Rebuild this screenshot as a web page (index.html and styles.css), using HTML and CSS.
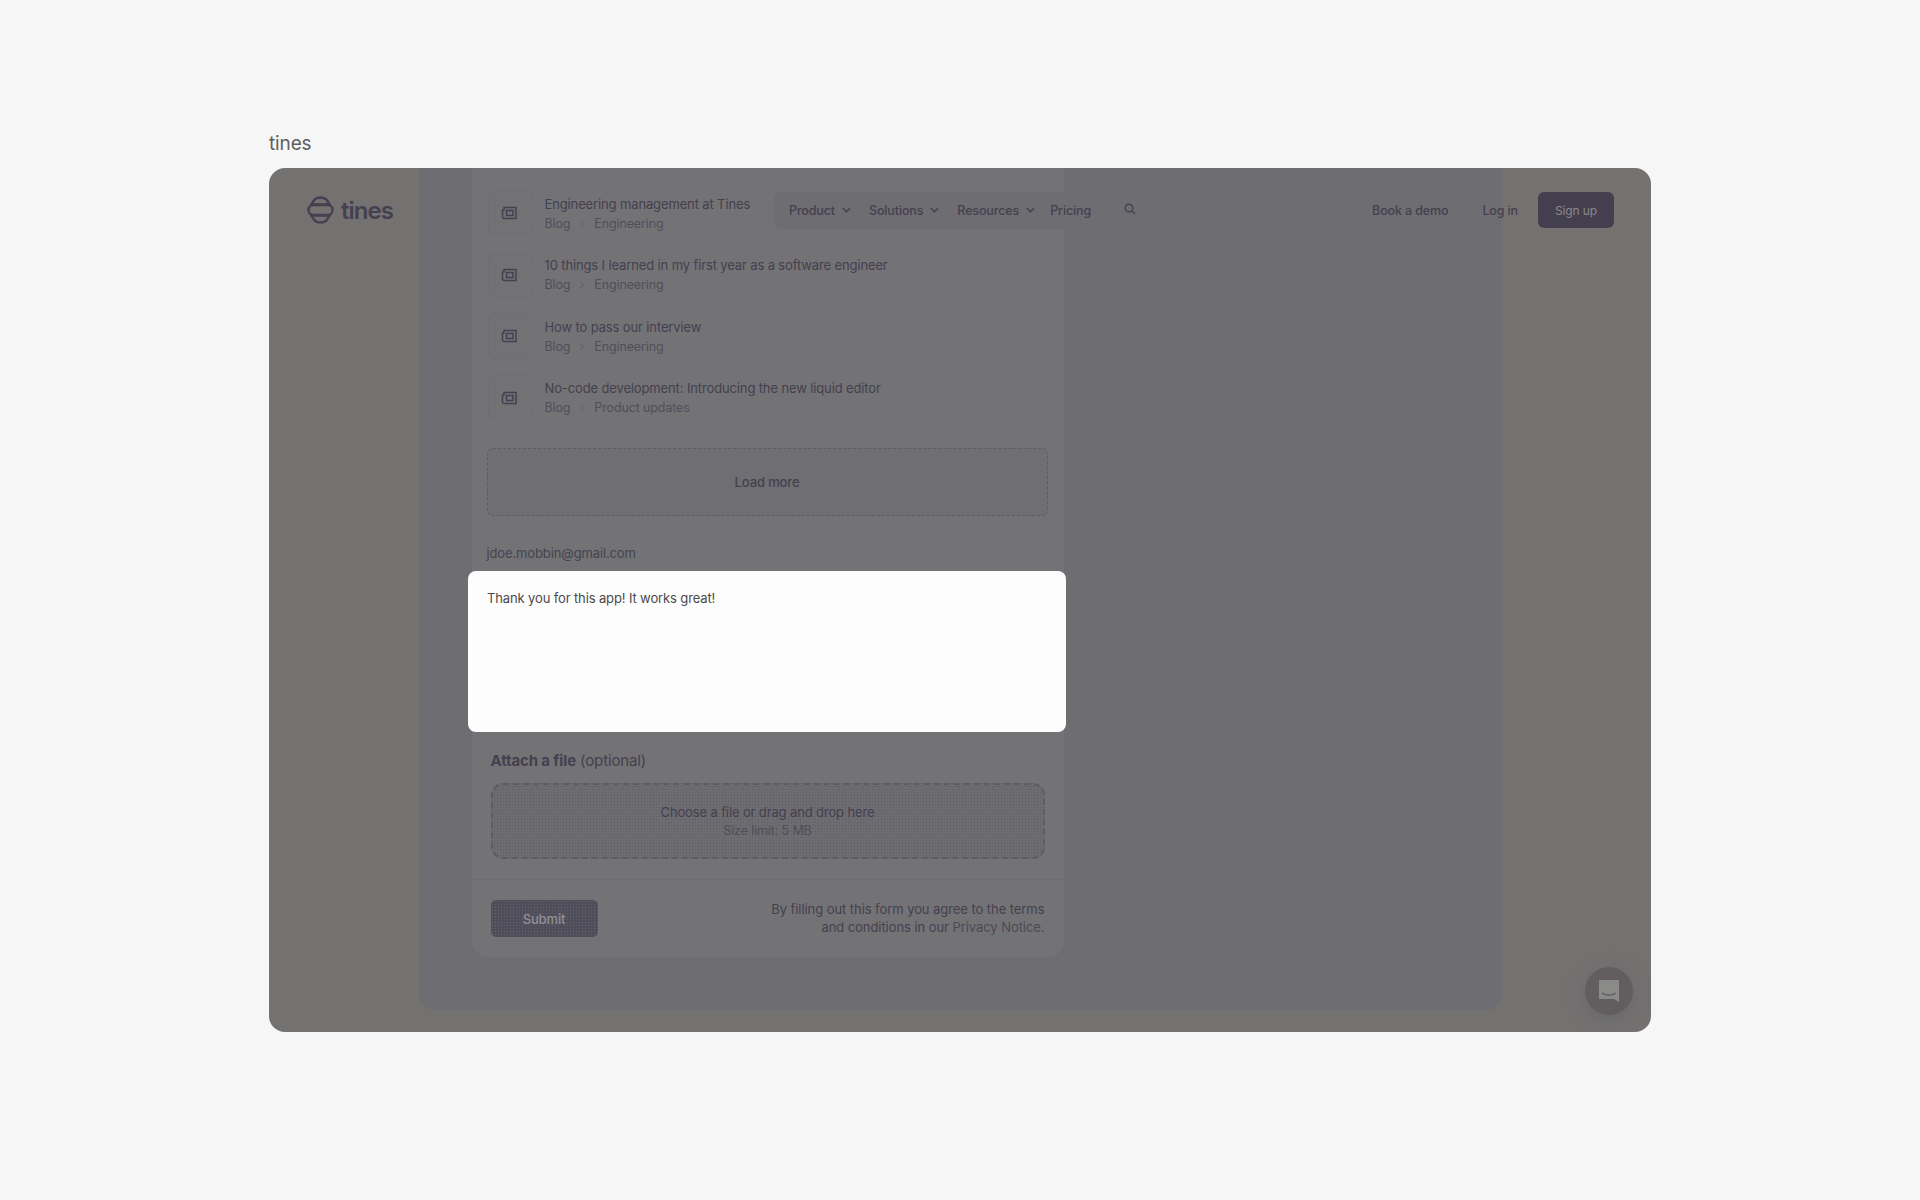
FILE: index.html
```html
<!DOCTYPE html>
<html lang="en">
<head>
  <meta charset="UTF-8" />
  <title>tines</title>
  <link rel="stylesheet" href="styles.css">
</head>
<body>
  <p class="caption">tines</p>

  <div class="frame">
    <header class="topbar">
      <a class="logo">
        <svg width="27" height="28" viewBox="0 0 27 28" fill="none" stroke="#44404f" stroke-width="2.4">
          <path d="M5 8.5C6 4 9 1.5 13.5 1.5S21 4 22 8.5" />
          <rect x="1.4" y="9" width="24.2" height="10" rx="5" />
          <path d="M5 19.5C6 24 9 26.5 13.5 26.5S21 24 22 19.5" />
          <path d="M3 8.5h21M3 19.5h21" />
        </svg>
        <span>tines</span>
      </a>
      <nav class="main-nav">
        <a>Product <svg class="chev" viewBox="0 0 10 6"><path d="M1 1l4 4 4-4" /></svg></a>
        <a>Solutions <svg class="chev" viewBox="0 0 10 6"><path d="M1 1l4 4 4-4" /></svg></a>
        <a>Resources <svg class="chev" viewBox="0 0 10 6"><path d="M1 1l4 4 4-4" /></svg></a>
        <a>Pricing</a>
        <svg class="search" viewBox="0 0 12 12"><circle cx="5" cy="5" r="3.8" /><path d="M8 8l3 3" /></svg>
      </nav>
      <div class="side-nav">
        <a class="demo">Book a demo</a>
        <a class="login">Log in</a>
        <a class="signup">Sign up</a>
      </div>
    </header>

    <div class="panel">
      <div class="form-card">
        <ul class="results">
          <li class="result">
            <span class="result-icon"><svg viewBox="0 0 16 14"><path d="M3 1.5h12v11H3a1.5 1.5 0 0 1-1.5-1.5V4H3z" /><rect x="5.5" y="4.5" width="6.500" height="5" /></svg></span>
            <div><p class="result-title">Engineering management at Tines</p><p class="crumbs">Blog <svg viewBox="0 0 6 8"><path d="M1.500 1l3 3-3 3" /></svg> Engineering</p></div>
          </li>
          <li class="result">
            <span class="result-icon"><svg viewBox="0 0 16 14"><path d="M3 1.5h12v11H3a1.5 1.5 0 0 1-1.5-1.5V4H3z" /><rect x="5.5" y="4.5" width="6.500" height="5" /></svg></span>
            <div><p class="result-title">10 things I learned in my first year as a software engineer</p><p class="crumbs">Blog <svg viewBox="0 0 6 8"><path d="M1.500 1l3 3-3 3" /></svg> Engineering</p></div>
          </li>
          <li class="result">
            <span class="result-icon"><svg viewBox="0 0 16 14"><path d="M3 1.5h12v11H3a1.5 1.5 0 0 1-1.5-1.5V4H3z" /><rect x="5.5" y="4.5" width="6.500" height="5" /></svg></span>
            <div><p class="result-title">How to pass our interview</p><p class="crumbs">Blog <svg viewBox="0 0 6 8"><path d="M1.500 1l3 3-3 3" /></svg> Engineering</p></div>
          </li>
          <li class="result">
            <span class="result-icon"><svg viewBox="0 0 16 14"><path d="M3 1.5h12v11H3a1.5 1.5 0 0 1-1.5-1.5V4H3z" /><rect x="5.5" y="4.5" width="6.500" height="5" /></svg></span>
            <div><p class="result-title">No-code development: Introducing the new liquid editor</p><p class="crumbs">Blog <svg viewBox="0 0 6 8"><path d="M1.500 1l3 3-3 3" /></svg> Product updates</p></div>
          </li>
        </ul>

        <button class="load-more">Load more</button>

        <div class="email">jdoe.mobbin@gmail.com</div>

        <div class="message">Thank you for this app! It works great!</div>

        <div class="attach">
          <p class="attach-label"><strong>Attach a file</strong> (optional)</p>
          <div class="dropzone">
            <p>Choose a file or drag and drop here</p>
            <p class="limit">Size limit: 5 MB</p>
          </div>
        </div>

        <div class="form-footer">
          <button class="submit">Submit</button>
          <p class="terms">By filling out this form you agree to the terms<br>and conditions in our <span class="notice">Privacy Notice.</span></p>
        </div>
      </div>
    </div>

    <button class="chat">
      <svg viewBox="0 0 20 22"><path d="M1 0h18a1 1 0 0 1 1 1v21l-5-3H1a1 1 0 0 1-1-1V1a1 1 0 0 1 1-1z" /><path class="smile" d="M3 13c4 3 10 3 14 0" /></svg>
    </button>
  </div>
</body>
</html>
```

FILE: styles.css
```css
* {
  margin: 0;
  padding: 0;
  box-sizing: border-box;
}

body {
  height: 1200px;
  padding: 132px 269px 0;
  font-family: Inter, sans-serif;
  font-size: 13px;
  letter-spacing: -0.01em;
  background: #f6f6f6;
  color: #44404f;
  overflow: hidden;
}

ul {
  list-style: none;
}

button {
  font: inherit;
  letter-spacing: inherit;
  border: none;
  color: inherit;
}

.caption {
  height: 36px;
  font-size: 19px;
  line-height: 23px;
  color: #5e5e60;
}

.frame {
  position: relative;
  display: flex;
  flex-direction: column;
  width: 1382px;
  height: 864px;
  border-radius: 16px;
  overflow: hidden;
  background: #747271;
}

/* sticky nav sits over the scrolled content */
.topbar {
  position: absolute;
  top: 24px;
  left: 38px;
  right: 37px;
  height: 36px;
  display: flex;
  align-items: center;
  font-size: 12.5px;
  font-weight: 500;
}

.logo {
  display: flex;
  align-items: center;
  gap: 7px;
  width: 467px;
}

.logo span {
  font-size: 24px;
  font-weight: 600;
  letter-spacing: -0.04em;
}

.main-nav {
  display: flex;
  align-items: center;
  flex: none;
  height: 37px;
  padding: 0 15px;
  width: 374px;
  border-radius: 6px;
  background: #6e6d72;
}

.main-nav a {
  display: flex;
  align-items: center;
  gap: 7px;
  margin-right: 18px;
  white-space: nowrap;
}

.main-nav a:nth-child(3) {
  margin-right: 15px;
}

.chev {
  width: 9px;
  height: 6px;
  fill: none;
  stroke: #44404f;
  stroke-width: 1.5;
}

.search {
  flex: none;
  width: 12px;
  height: 12px;
  margin: -2px 0 0 15px;
  fill: none;
  stroke: #44404f;
  stroke-width: 1.4;
}

.side-nav {
  display: flex;
  align-items: center;
  margin-left: auto;
  height: 36px;
}

.demo {
  margin-right: 34px;
}

.login {
  margin-right: 20px;
}

.signup {
  display: flex;
  align-items: center;
  justify-content: center;
  width: 76px;
  height: 36px;
  font-size: 12px;
  font-weight: 400;
  border-radius: 6px;
  background: #433f4f;
  color: #8a888e;
}

.panel {
  width: 1083px;
  height: 842px;
  margin: 0 auto;
  padding-left: 53px;
  border-radius: 0 0 16px 16px;
  background: #6e6d72;
}

.form-card {
  width: 592px;
  height: 789px;
  padding-top: 21px;
  border-radius: 0 0 16px 16px;
  background: #737375;
}

.results {
  display: flex;
  flex-direction: column;
  gap: 15.6px;
  padding: 0 16px;
}

.result {
  display: flex;
  align-items: center;
  gap: 11px;
  height: 46px;
}

.result-icon {
  display: flex;
  align-items: center;
  justify-content: center;
  flex: none;
  width: 46px;
  height: 46px;
  margin-top: 2px;
  padding-right: 3px;
  border-radius: 8px;
  background: #727173;
  border: 1px solid #6f6e72;
}

.result-icon svg {
  width: 16px;
  height: 14px;
  fill: none;
  stroke: #44404f;
  stroke-width: 1.5;
}

.result-title {
  font-size: 13px;
  line-height: 20px;
  margin-top: 2px;
}

.crumbs {
  display: flex;
  align-items: center;
  gap: 7px;
  margin-top: 1px;
  font-size: 12.5px;
  line-height: 18px;
  color: #504e5a;
}

.crumbs svg {
  width: 6px;
  height: 8px;
  margin: 0 2px;
  fill: none;
  stroke: #67666c;
  stroke-width: 1.2;
}

.load-more {
  display: block;
  width: 561px;
  height: 68px;
  margin: 28.4px 0 16px 15px;
  font-weight: 500;
  border: 1px dashed #5d5c63;
  border-radius: 6px;
  background: #6f6e73;
}

.email {
  height: 39px;
  padding: 13px 15px 0;
  font-size: 13px;
  line-height: 14px;
  color: #45434f;
  border-top: 1px solid #6f6e72;
}

.message {
  width: 598px;
  height: 161px;
  margin-left: -4px;
  padding: 18px 19.5px;
  font-size: 13px;
  line-height: 18px;
  color: #4a4a4a;
  border-radius: 8px;
  background: #fdfdfd;
}

.attach {
  height: 148px;
  padding: 19px 19px 0;
  border-bottom: 1px solid #6d6c70;
}

.attach-label {
  height: 32px;
  font-size: 15px;
  line-height: 20px;
}

.dropzone {
  display: flex;
  flex-direction: column;
  align-items: center;
  justify-content: center;
  gap: 1px;
  height: 76px;
  line-height: 17px;
  border: 2px dashed #5d5c63;
  border-radius: 12px;
  background: radial-gradient(#5f5e64 0.7px, transparent 0.8px) 0 0 / 3px 3px, #6d6c71;
}

.limit {
  color: #4f4e56;
  font-size: 12.5px;
}

.form-footer {
  display: flex;
  justify-content: space-between;
  align-items: flex-start;
  padding: 20px 19px 0;
}

.submit {
  width: 107px;
  height: 37px;
  border-radius: 5px;
  background: radial-gradient(#66646b 0.7px, transparent 0.8px) 0 0 / 3px 3px, #514e5c;
  color: #918f96;
  font-weight: 500;
}

.terms {
  text-align: right;
  line-height: 18px;
  letter-spacing: -0.005em;
}

.notice {
  color: #4b4955;
}

.chat {
  position: absolute;
  right: 18px;
  bottom: 17px;
  display: flex;
  align-items: center;
  justify-content: center;
  width: 48px;
  height: 48px;
  border-radius: 50%;
  background: #625e60;
  box-shadow: 0 4px 20px rgba(80, 80, 90, 0.35);
}

.chat svg {
  width: 20px;
  height: 22px;
  fill: #8a8a88;
}

.chat .smile {
  fill: none;
  stroke: #625e60;
  stroke-width: 1.5;
}
```
